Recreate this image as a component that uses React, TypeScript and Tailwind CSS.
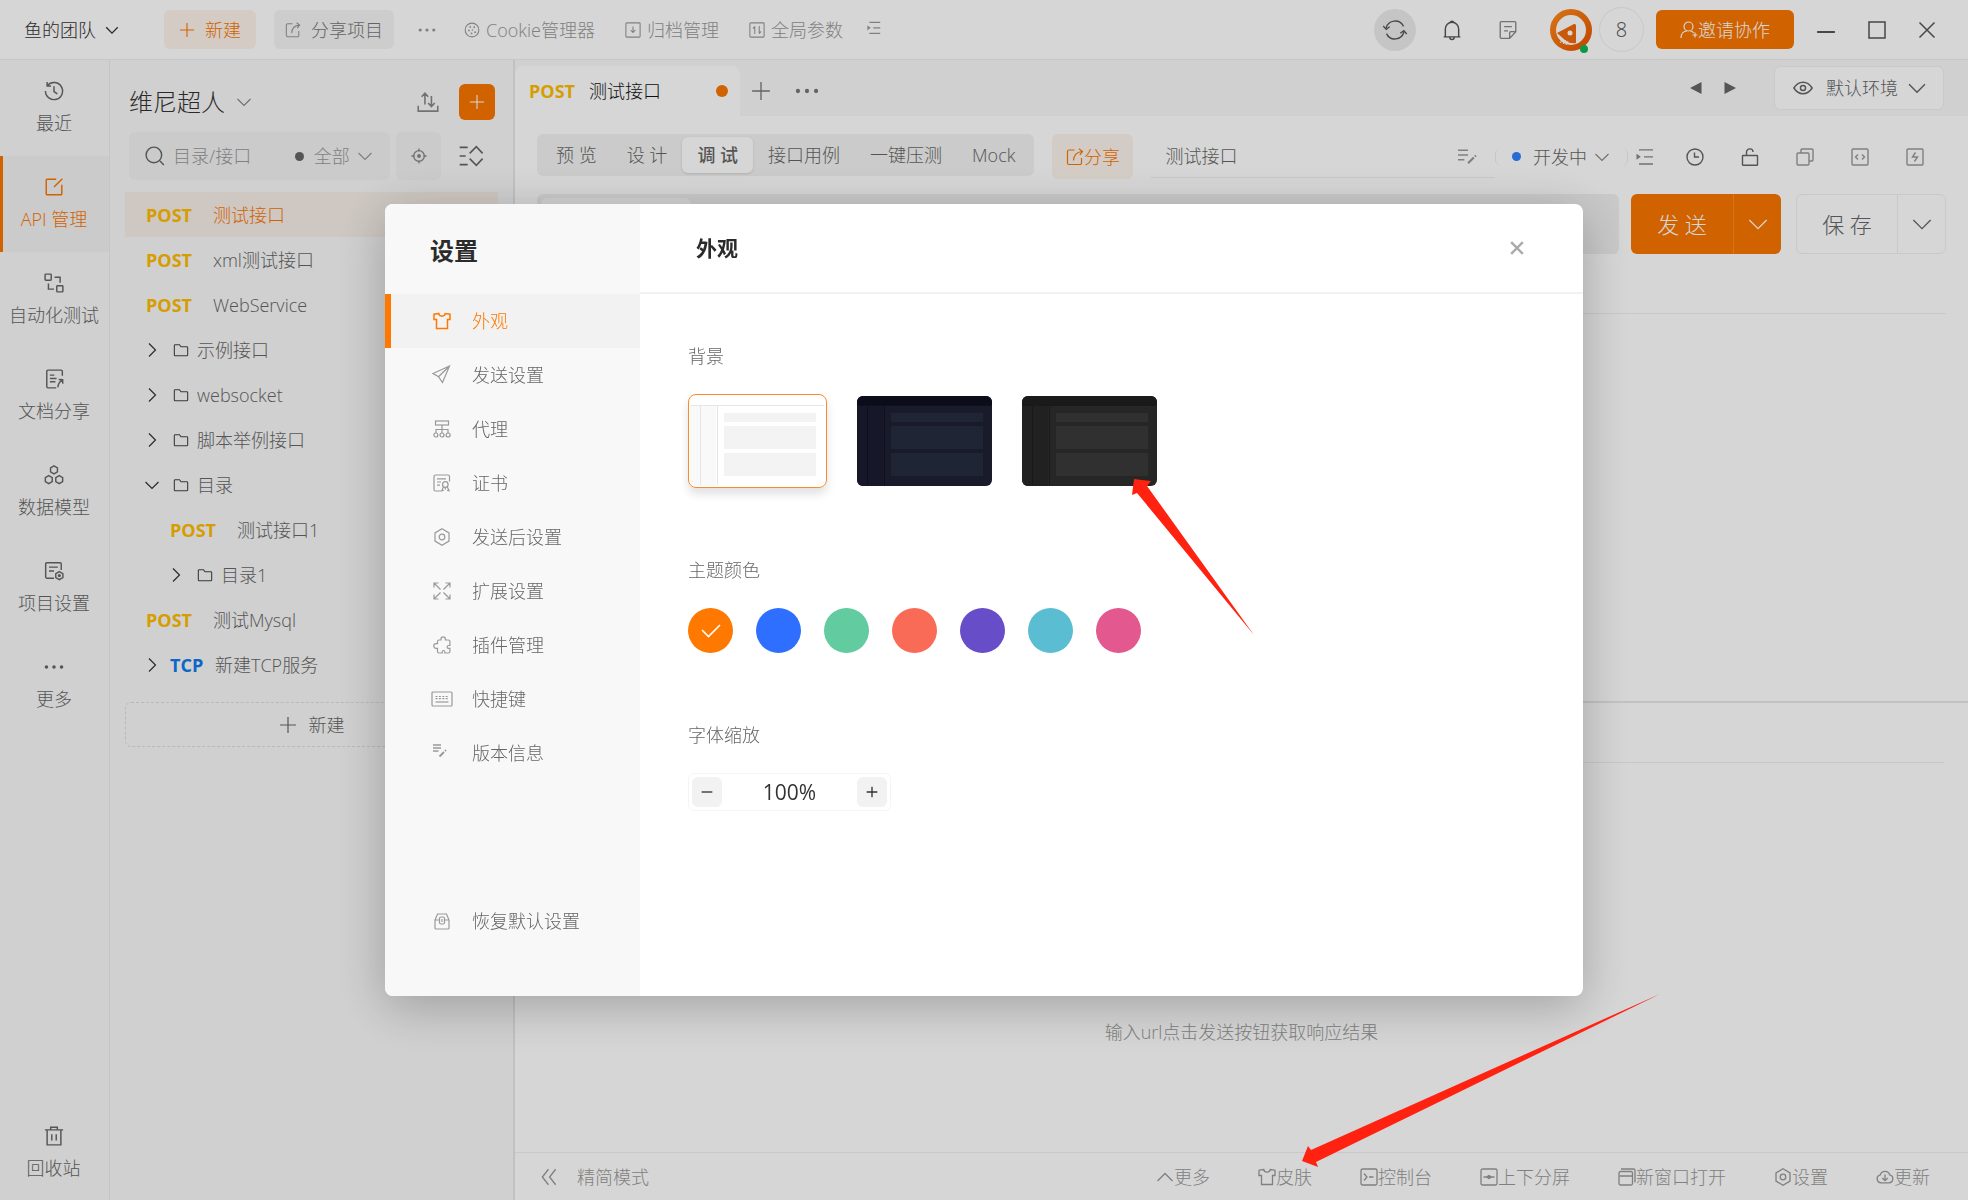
import React, { useState } from "react";
import clsx from "clsx";

type IconName =
  | "chevronDown"
  | "chevronRight"
  | "chevronUp"
  | "plus"
  | "minus"
  | "dots"
  | "share"
  | "cookie"
  | "archive"
  | "params"
  | "indent"
  | "sync"
  | "bell"
  | "note"
  | "userPlus"
  | "maximize"
  | "close"
  | "history"
  | "edit"
  | "flow"
  | "docShare"
  | "model"
  | "projectSettings"
  | "trash"
  | "transfer"
  | "search"
  | "locate"
  | "expandList"
  | "folder"
  | "eye"
  | "lineEdit"
  | "version"
  | "clock"
  | "unlock"
  | "copy"
  | "code"
  | "bolt"
  | "collapse"
  | "shirt"
  | "console"
  | "split"
  | "window"
  | "hexagon"
  | "cloud"
  | "send"
  | "proxy"
  | "certificate"
  | "expand"
  | "plugin"
  | "keyboard"
  | "restore";

// Every icon is drawn in an 18 x 18 box.
const icons: Record<IconName, React.ReactNode> = {
  chevronDown: <path d="M2.5 6 9 12.5 15.5 6" />,
  chevronRight: <path d="M6 2.5 12.5 9 6 15.5" />,
  chevronUp: <path d="M1.5 13 9 5.5l7.5 7.5" />,
  plus: <path d="M9 1v16M1 9h16" />,
  minus: <path d="M1 9h16" />,
  dots: (
    <g fill="currentColor" stroke="none">
      <circle cx="2.2" cy="9" r="1.6" />
      <circle cx="9" cy="9" r="1.6" />
      <circle cx="15.8" cy="9" r="1.6" />
    </g>
  ),
  share: (
    <>
      <path d="M8.5 2H3a1.5 1.5 0 0 0-1.500 1.500v11.500A1.500 1.500 0 0 0 3 16.500h11a1.500 1.500 0 0 0 1.500-1.500v-5" />
      <path d="M7.500 12.500c.3-5 3-8.500 8.500-9M13 .8l3.500 2.700-2.700 3.300" />
    </>
  ),
  cookie: (
    <>
      <circle cx="9" cy="9" r="7.700" />
      <g fill="currentColor" stroke="none">
        <circle cx="7" cy="5.500" r="1" />
        <circle cx="11.500" cy="5.800" r="1" />
        <circle cx="5.500" cy="9.500" r="1" />
        <circle cx="9.500" cy="9" r=".8" />
        <circle cx="8.500" cy="12.800" r="1" />
        <circle cx="12.500" cy="11.500" r="1" />
      </g>
    </>
  ),
  archive: (
    <>
      <rect x="1" y="1" width="16" height="16" rx="1" />
      <path d="M9 5v6.500M6.300 9 9 11.800 11.700 9" />
    </>
  ),
  params: (
    <>
      <rect x="1" y="1" width="16" height="16" rx="1" />
      <path d="M6.500 5v8.500M4.500 7.500l2-2.500M11.500 4.500V13M11.500 13l2-2.500" />
    </>
  ),
  indent: (
    <>
      <path d="M3 1.800h14M8 8.800h9M3 16h14" />
      <path d="M.5 5.800 4.800 8.800.5 11.800z" fill="currentColor" stroke="none" />
    </>
  ),
  sync: (
    <>
      <path d="M2.300 7.500a7 7 0 0 1 13.100-1.200M15.700 10.500a7 7 0 0 1-13.100 1.200" />
      <path d="m.2 6 2.200 2.500L5 6.500M17.800 12l-2.200-2.500L13 11.500" />
    </>
  ),
  bell: (
    <path d="M3 15V8a6 6 0 0 1 12 0v7M1.500 15.200h15M7 15.500a2 2 0 0 0 4 0M7.300 2.300a1.800 1.800 0 0 1 3.400 0" />
  ),
  note: (
    <path d="M16 10.500V2.500a1 1 0 0 0-1-1H3a1 1 0 0 0-1 1v13a1 1 0 0 0 1 1h7.500zM10.500 16.500v-5a1 1 0 0 1 1-1H16M5.500 6h7M5.500 9.800h3.500" />
  ),
  userPlus: (
    <>
      <circle cx="8.500" cy="5.500" r="4.500" />
      <path d="M1 17c0-4 2.500-7 6-7.200M10.500 10c1.500.3 2.600 1 3.200 2M15 11.500v5M12.500 14H17.500" />
    </>
  ),
  maximize: <rect x="1" y="1" width="16" height="16" />,
  close: <path d="m1.500 1.500 15 15M16.500 1.500l-15 15" />,
  history: <path d="M3 4.200A7.700 7.700 0 1 1 1.300 9M2.800 1v3.500h3.500M9 4.800V9.500l3 2" />,
  edit: (
    <>
      <path d="M11 2H3a1 1 0 0 0-1 1v12a1 1 0 0 0 1 1h12a1 1 0 0 0 1-1V7" />
      <path d="m9 9 7.500-7.500" />
    </>
  ),
  flow: (
    <>
      <rect x="1" y="1" width="5.500" height="5.500" rx=".6" />
      <rect x="11.500" y="11.500" width="5.500" height="5.500" rx=".6" />
      <path d="M9.500 3.800h5v5M4 9.500v5h5" />
    </>
  ),
  docShare: (
    <>
      <path d="M16.500 6V2a1 1 0 0 0-1-1h-12a1 1 0 0 0-1 1v14a1 1 0 0 0 1 1h7.500" />
      <path d="M5.300 5.500h4M5.300 8.500h6M5.300 11.500h5M12.500 16.500c.2-3 1.200-5 3.800-6.500M13.300 9.500l3.500.2.100 3.500" />
    </>
  ),
  model: (
    <path d="m9 .8 3.100 1.800v3.600L9 8 5.900 6.200V2.600zM4.300 9.500l3.100 1.800v3.600l-3.100 1.800-3.100-1.800v-3.600zM13.700 9.500l3.100 1.800v3.600l-3.100 1.800-3.100-1.800v-3.600z" />
  ),
  projectSettings: (
    <>
      <path d="M15.500 8V2.500a1 1 0 0 0-1-1h-12a1 1 0 0 0-1 1v12a1 1 0 0 0 1 1h6.500M4.500 5.500h8M4.500 9h4.500" />
      <path d="m13.800 9.500 3.200 1.800v3.600l-3.200 1.800-3.200-1.800v-3.600z" />
      <circle cx="13.800" cy="13.100" r=".8" />
    </>
  ),
  trash: <path d="M.8 3.500h16.400M2.800 3.500V17h12.400V3.500M6 3.500V1.200h6v2.300M7 7.500v5.500M11 7.500v5.500" />,
  transfer: (
    <path d="M1 12v4.500h16V12M6.500 11V2M3.800 4.700 6.500 1.800l2.700 2.900M11.800 4v8M9.100 9.800l2.700 2.900 2.700-2.900" />
  ),
  search: (
    <>
      <circle cx="8" cy="8" r="7" />
      <path d="m13.500 13.500 3.500 3.500" />
    </>
  ),
  locate: (
    <>
      <circle cx="9" cy="9" r="6" />
      <path d="M9 .5V4M9 14v3.500M.5 9H4M14 9h3.500" />
      <circle cx="9" cy="9" r="1.400" fill="currentColor" />
    </>
  ),
  expandList: (
    <path d="M.5 2.500h6M.5 9h4.500M.5 15.500h6M8 7l5-5 4.700 5M8 11l5 5 4.700-5" />
  ),
  folder: (
    <path d="M1.500 14.500V4a1 1 0 0 1 1-1h4.800l1.700 2.300h6.500a1 1 0 0 1 1 1v8.200a1 1 0 0 1-1 1h-13a1 1 0 0 1-1-1z" />
  ),
  eye: (
    <>
      <path d="M.8 9C3 5.500 5.700 3.800 9 3.800S15 5.500 17.200 9C15 12.500 12.300 14.200 9 14.200S3 12.500.8 9z" />
      <circle cx="9" cy="9" r="2.300" />
    </>
  ),
  lineEdit: (
    <>
      <path d="M0 3h9.500M0 7.500h9.500M0 12h6" strokeWidth="1.500" />
      <path d="m9.500 15.500 5.500-5.500M16 9l1-1" strokeWidth="2" />
    </>
  ),
  version: (
    <>
      <path d="M0 1h8M0 4h8M0 7h5.500" strokeWidth="1.500" />
      <path d="m6.500 12.500 4.500-4.500M12 7l1-1" strokeWidth="1.800" />
    </>
  ),
  clock: (
    <>
      <circle cx="9" cy="9" r="8" />
      <path d="M8.500 4.500V9h4.500" />
    </>
  ),
  unlock: (
    <>
      <rect x="1.500" y="7.500" width="15" height="9.800" rx=".6" />
      <path d="M5.500 7.500V4.300a3.300 3.300 0 0 1 6.600-.3" />
    </>
  ),
  copy: (
    <>
      <rect x="1" y="5" width="12" height="12" rx="1" />
      <path d="M5 5V2a1 1 0 0 1 1-1h10a1 1 0 0 1 1 1v10a1 1 0 0 1-1 1h-3" />
    </>
  ),
  code: (
    <>
      <rect x="1" y="1" width="16" height="16" rx="1" />
      <path d="m7 6.500-2.500 2.500 2.500 2.500M11 6.500l2.500 2.500-2.500 2.500" />
    </>
  ),
  bolt: (
    <>
      <rect x="1" y="1" width="16" height="16" rx="1" />
      <path d="M9.500 4.500 6.500 9h5L8.500 13.500" />
    </>
  ),
  collapse: <path d="M8.500 2 3 9l5.500 7M15 2 9.500 9l5.500 7" />,
  shirt: (
    <path d="M5.800 1.500 1 2.200v5.300h2.500v9h11v-9H17V2.200l-4.800-.7C11.800 5 6.200 5 5.800 1.500z" />
  ),
  console: (
    <>
      <rect x="1" y="1" width="16" height="16" rx="1.500" />
      <path d="m4 5.500 3 3.500-3 3.500M9 9h4.500" />
    </>
  ),
  split: (
    <>
      <rect x="1" y="1" width="16" height="16" rx="1.500" />
      <path d="M3.500 9h11M6.500 9 9 7.500 11.500 9 9 10.500z" fill="currentColor" />
    </>
  ),
  window: (
    <>
      <rect x="1" y="3.500" width="13.500" height="13.500" rx="1.500" />
      <path d="M1.500 8H14M3 1h12.500A1.500 1.500 0 0 1 17 2.500V14.500" />
    </>
  ),
  hexagon: (
    <>
      <path d="M9 .8 16 4.900v8.200l-7 4.100-7-4.100V4.900z" />
      <circle cx="9" cy="9" r="2.800" />
    </>
  ),
  cloud: (
    <path d="M5 14.800a4 4 0 0 1-.7-7.900 4.900 4.900 0 0 1 9.400 0 4 4 0 0 1-.7 7.900zM9 6.500v6M6.300 10 9 12.700l2.700-2.700" />
  ),
  send: <path d="M16.500 0 0 7.500l5.500 3.200 4 5.800zM16.500 0 5.500 10.700" />,
  proxy: (
    <>
      <rect x="2.500" y="1" width="13" height="4" />
      <path d="M9 5v8M3 13V9.500h12V13" />
      <circle cx="2.900" cy="15" r="2" />
      <circle cx="9" cy="15" r="2" />
      <circle cx="15.100" cy="15" r="2" />
    </>
  ),
  certificate: (
    <>
      <path d="M16.500 7.500v-5a1.500 1.500 0 0 0-1.500-1.500H2.500A1.500 1.500 0 0 0 1 2.500v13A1.500 1.500 0 0 0 2.500 17H8M4 4.800h9M4 8h4M4 11.200h3" />
      <circle cx="12.300" cy="10.500" r="2.800" />
      <path d="m10.500 12.800-1.700 4 1.900-.4M14.200 12.800l1.900 4-2-.4M12.300 13.500v2" />
    </>
  ),
  expand: (
    <path d="M1 5.500V1h4.500M1 1l6.500 6.500M12.500 1H17v4.500M17 1l-6.500 6.500M1 12.500V17h4.500M1 17l6.500-6.500M12.500 17H17v-4.500M17 17l-6.500-6.500" />
  ),
  plugin: (
    <path d="M4.500 12.300H3a2.300 2.300 0 0 1 0-4.600h1.500V5.500a1.500 1.500 0 0 1 1.500-1.500h2V3a2.200 2.200 0 0 1 4.400 0v1h3a1.500 1.500 0 0 1 1.500 1.500v4h-1.400a1.400 1.400 0 0 0 0 2.800h1.400v3.200a1.500 1.500 0 0 1-1.500 1.500h-3.600v-1.200a1.300 1.300 0 0 0-2.600 0V17H6a1.500 1.500 0 0 1-1.500-1.500z" />
  ),
  keyboard: (
    <>
      <rect x="-1" y="2" width="20" height="14" rx="1" />
      <path d="M2.500 6.500h13M2.500 8.700h13" strokeDasharray="2 1.400" />
      <path d="M2.500 12h13" />
    </>
  ),
  restore: (
    <>
      <path d="M2 8 4.500 2h9L16 8v8a1 1 0 0 1-1 1H3a1 1 0 0 1-1-1zM2 8h4.500M11.500 8H16" />
      <rect x="6.500" y="5" width="5" height="7" rx="1.500" />
      <path d="M9 7v3" />
    </>
  ),
};

type IconProps = {
  name: IconName;
  className?: string;
  weight?: number;
};

const Icon: React.FC<IconProps> = ({ name, className = "size-[18px]", weight = 1.2 }) => (
  <svg
    viewBox="0 0 18 18"
    fill="none"
    stroke="currentColor"
    strokeWidth={weight}
    className={clsx("shrink-0 overflow-visible", className)}
    aria-hidden="true"
  >
    {icons[name]}
  </svg>
);

const TopBar: React.FC = () => (
  <header className="flex h-[60px] items-center justify-between border-b border-[#efefef] bg-white pl-6 pr-8 text-[#999]">
    <div className="flex items-center">
      <button className="flex items-center gap-2 text-[#333]">
        鱼的团队
        <Icon name="chevronDown" className="size-4" weight={1.5} />
      </button>
      <button className="ml-11 flex h-[39px] items-center gap-2.5 rounded-md bg-[#fdf4ea] px-[15px] text-[#fa7500]">
        <Icon name="plus" className="size-4" />
        新建
      </button>
      <button className="ml-[18px] flex h-[39px] items-center gap-2.5 rounded-md bg-[#f5f5f5] px-[11px] text-[#777]">
        <Icon name="share" className="size-4 text-[#999]" />
        分享项目
      </button>
      <button aria-label="更多操作" className="ml-6">
        <Icon name="dots" />
      </button>
      <a href="#cookie" className="ml-7 flex items-center gap-1.5">
        <Icon name="cookie" className="size-4" />
        Cookie管理器
      </a>
      <a href="#archive" className="ml-[30px] flex items-center gap-1.5">
        <Icon name="archive" className="size-4" />
        归档管理
      </a>
      <a href="#params" className="ml-[30px] flex items-center gap-1.5">
        <Icon name="params" className="size-4" />
        全局参数
      </a>
      <button aria-label="列表" className="mb-1 ml-6">
        <Icon name="indent" className="size-[14px]" weight={1.5} />
      </button>
    </div>
    <div className="flex items-center text-[#555]">
      <button aria-label="同步" className="flex size-[42px] items-center justify-center rounded-full bg-[#ebebeb]">
        <Icon name="sync" className="size-6" weight={1} />
      </button>
      <button aria-label="通知" className="ml-[26px]">
        <Icon name="bell" className="size-5" weight={1.3} />
      </button>
      <button aria-label="备注" className="ml-9 text-[#888]">
        <Icon name="note" className="size-5" />
      </button>
      <button aria-label="个人中心" className="relative ml-8">
        <svg viewBox="0 0 42 42" className="size-[42px]" aria-hidden="true">
          <defs>
            <linearGradient id="avatar" x1="0" y1="0" x2="1" y2="1">
              <stop offset="0" stopColor="#ff8a1a" />
              <stop offset="1" stopColor="#e85500" />
            </linearGradient>
          </defs>
          <circle cx="21" cy="21" r="18" fill="#fff" stroke="url(#avatar)" strokeWidth="6" />
          <path d="M7 24 24 15q2-.5 2 1.500V34q-6 1-10-2z" fill="#ef6a0c" />
          <path d="m10 34 3-4M13 35l3-4M16 36l2-4" stroke="#fff" strokeWidth="1" />
          <circle cx="20" cy="24" r="2.500" fill="#fff" />
        </svg>
        <span className="absolute right-1 -bottom-0.5 size-2 rounded-full bg-[#0bb850]" />
      </button>
      <span className="ml-[7px] flex size-[45px] items-center justify-center rounded-full border border-[#efefef] text-[20px]">
        8
      </span>
      <button className="ml-3 flex h-[39px] w-[138px] items-center justify-center rounded-md bg-[#fa7500] text-white">
        <Icon name="userPlus" />
        邀请协作
      </button>
      <button aria-label="最小化" className="ml-[22px] pt-1">
        <Icon name="minus" className="size-5" weight={1.8} />
      </button>
      <button aria-label="最大化" className="ml-8">
        <Icon name="maximize" className="size-[18px]" weight={1.5} />
      </button>
      <button aria-label="关闭窗口" className="ml-8">
        <Icon name="close" className="size-[18px]" weight={1.5} />
      </button>
    </div>
  </header>
);

const railItems: { label: string; icon: IconName }[] = [
  { label: "最近", icon: "history" },
  { label: "API 管理", icon: "edit" },
  { label: "自动化测试", icon: "flow" },
  { label: "文档分享", icon: "docShare" },
  { label: "数据模型", icon: "model" },
  { label: "项目设置", icon: "projectSettings" },
  { label: "更多", icon: "dots" },
];

const Rail: React.FC = () => (
  <nav className="flex w-[110px] shrink-0 flex-col border-r border-[#ebebeb] pb-5">
    {railItems.map((item) => {
      const active = item.label === "API 管理";
      return (
        <a
          key={item.label}
          href={`#${item.icon}`}
          className={clsx(
            "flex h-24 flex-col items-center justify-center gap-2.5 border-l-[3px] pr-1",
            active ? "border-[#fa7500] bg-[#f2f2f2] text-[#fa7500]" : "border-transparent text-[#666]"
          )}
        >
          <Icon name={item.icon} className="size-5" weight={1.3} />
          {item.label}
        </a>
      );
    })}
    <a href="#trash" className="mt-auto flex flex-col items-center gap-2.5 pr-0.5 text-[#666]">
      <Icon name="trash" className="size-5" weight={1.3} />
      回收站
    </a>
  </nav>
);

type TreeRow = {
  name: string;
  method?: "POST" | "TCP";
  nested?: boolean;
  open?: boolean;
  active?: boolean;
};

const tree: TreeRow[] = [
  { name: "测试接口", method: "POST", active: true },
  { name: "xml测试接口", method: "POST" },
  { name: "WebService", method: "POST" },
  { name: "示例接口" },
  { name: "websocket" },
  { name: "脚本举例接口" },
  { name: "目录", open: true },
  { name: "测试接口1", method: "POST", nested: true },
  { name: "目录1", nested: true },
  { name: "测试Mysql", method: "POST" },
  { name: "新建TCP服务", method: "TCP" },
];

const Sidebar: React.FC = () => (
  <aside className="flex w-[405px] shrink-0 flex-col border-r-2 border-[#e6e6e6] px-[15px] pt-6">
    <div className="flex h-9 items-center">
      <button className="ml-1 flex items-center gap-2.5 text-2xl leading-9 text-[#333]">
        维尼超人
        <Icon name="chevronDown" className="size-[18px] text-[#888]" />
      </button>
      <button aria-label="导入导出" className="ml-auto text-[#888]">
        <Icon name="transfer" className="size-[22px]" weight={1.3} />
      </button>
      <button
        aria-label="新建接口"
        className="ml-5 mr-[3px] flex size-9 items-center justify-center rounded-md bg-[#fa7500] text-white"
      >
        <Icon name="plus" className="size-4" />
      </button>
    </div>
    <div className="mt-3 ml-1 flex h-12 items-center gap-1.5">
      <div className="flex h-12 w-[261px] items-center rounded-md bg-[#f2f2f2] px-4 text-[#999]">
        <Icon name="search" className="size-5 text-[#666]" weight={1.3} />
        <input
          aria-label="搜索"
          placeholder="目录/接口"
          className="ml-2 w-28 bg-transparent outline-none placeholder:text-[#999]"
        />
        <span className="ml-2.5 size-[9px] rounded-full bg-[#666]" />
        <select aria-label="范围" className="ml-2.5 w-11 appearance-none bg-transparent outline-none">
          <option>全部</option>
        </select>
        <Icon name="chevronDown" className="size-[18px]" />
      </div>
      <button
        aria-label="定位"
        className="flex h-12 w-[45px] items-center justify-center rounded-md bg-[#f2f2f2] text-[#888]"
      >
        <Icon name="locate" className="size-4" weight={1.5} />
      </button>
      <button aria-label="展开列表" className="ml-3 text-[#666]">
        <Icon name="expandList" className="size-6" />
      </button>
    </div>
    <ul className="mt-3 text-[#666]">
      {tree.map((row) => (
        <li
          key={row.name}
          className={clsx(
            "flex h-[45px] items-center",
            row.nested ? "pl-[42px]" : "pl-[18px]",
            row.active && "bg-[#f6eee8] text-[#fa7500]"
          )}
        >
          {row.method !== "POST" && (
            <Icon
              name={row.open ? "chevronDown" : "chevronRight"}
              className="mr-[9px] size-[18px] text-[#333]"
            />
          )}
          {!row.method && <Icon name="folder" className="ml-[3px] mr-2 size-4 text-[#444]" />}
          {row.method === "POST" && (
            <span className="ml-[3px] w-[67px] font-bold text-[#ffbc00]">POST</span>
          )}
          {row.method === "TCP" && <span className="w-[45px] font-bold text-[#0c7af0]">TCP</span>}
          <a href={`#${row.name}`}>{row.name}</a>
        </li>
      ))}
    </ul>
    <button className="mt-[15px] flex h-[45px] items-center justify-center gap-3 rounded-md border border-dashed border-[#ddd] text-[#666]">
      <Icon name="plus" />
      新建
    </button>
  </aside>
);

const modes = ["预 览", "设 计", "调 试", "接口用例", "一键压测", "Mock"];

const toolbarIcons: { label: string; icon: IconName; dark?: boolean }[] = [
  { label: "历史", icon: "clock", dark: true },
  { label: "锁定", icon: "unlock", dark: true },
  { label: "复制", icon: "copy" },
  { label: "代码", icon: "code" },
  { label: "快捷请求", icon: "bolt" },
];

const Workspace: React.FC = () => (
  <main className="flex min-w-0 flex-1 flex-col">
    <div className="flex h-14 items-end pr-6">
      <div className="flex h-[50px] w-[225px] items-center rounded-t-lg bg-white pr-3 pl-[14px]">
        <span className="w-[60px] font-bold text-[#ffbc00]">POST</span>
        <span className="text-[#111]">测试接口</span>
        <span className="ml-auto size-3 rounded-full bg-[#fa7500]" />
      </div>
      <div className="flex h-[50px] items-center text-[#777]">
        <button aria-label="新标签" className="ml-[11px]">
          <Icon name="plus" className="size-5" />
        </button>
        <button aria-label="标签菜单" className="ml-6">
          <Icon name="dots" className="size-6" />
        </button>
      </div>
      <div className="ml-auto flex h-[50px] items-start text-[#666]">
        <button aria-label="上一个" className="mt-4">
          <svg viewBox="0 0 12 12" className="size-3" fill="currentColor" aria-hidden="true">
            <path d="M11.500 0v12L0 6z" />
          </svg>
        </button>
        <button aria-label="下一个" className="mt-4 ml-[22px]">
          <svg viewBox="0 0 12 12" className="size-3" fill="currentColor" aria-hidden="true">
            <path d="M.5 0v12L12 6z" />
          </svg>
        </button>
        <div className="ml-[38px] flex h-11 items-center rounded-md border border-[#f0f0f0] bg-white pr-[15px] pl-[18px]">
          <Icon name="eye" className="size-5" weight={1.3} />
          <select aria-label="环境" className="ml-[13px] w-20 appearance-none bg-transparent outline-none">
            <option>默认环境</option>
          </select>
          <Icon name="chevronDown" className="size-[22px]" />
        </div>
      </div>
    </div>

    <section className="flex flex-[8_1_0px] flex-col border-b-2 border-[#e8e8e8] bg-white px-[22px] pt-[18px]">
      <div className="flex h-[45px] items-center text-[#666]">
        <div className="flex h-[42px] items-center self-start rounded-md bg-[#f2f2f2] px-1">
          {modes.map((mode) => (
            <button
              key={mode}
              className={clsx(
                "h-9 rounded-md px-[15px]",
                mode === "调 试" && "bg-white font-medium shadow-sm"
              )}
            >
              {mode}
            </button>
          ))}
        </div>
        <button className="ml-[18px] flex h-[45px] w-[81px] shrink-0 items-center justify-center rounded-md bg-[#fcf4ec] text-[#fa7500]">
          <Icon name="share" />
          分享
        </button>
        <div className="ml-[18px] flex h-[42px] min-w-0 flex-1 items-center border-b border-[#f0f0f0] pr-[18px] pl-[14px]">
          <input
            aria-label="接口名称"
            defaultValue="测试接口"
            className="min-w-0 flex-1 bg-transparent outline-none"
          />
          <Icon name="lineEdit" className="size-[19px] text-[#999]" />
        </div>
        <div className="flex h-[18px] items-center rounded-md border-x border-[#eee] px-4">
          <span className="size-[9px] rounded-full bg-[#2f80ff]" />
          <select aria-label="状态" className="ml-3 w-[60px] appearance-none bg-transparent outline-none">
            <option>开发中</option>
          </select>
          <Icon name="chevronDown" className="size-[18px] text-[#888]" />
        </div>
        <button aria-label="目录" className="ml-2 text-[#888]">
          <Icon name="indent" weight={1.3} />
        </button>
        <div className="mr-[22px] ml-8 flex gap-[37px]">
          {toolbarIcons.map((item) => (
            <button
              key={item.icon}
              aria-label={item.label}
              className={item.dark ? "text-[#666]" : "text-[#999]"}
            >
              <Icon name={item.icon} weight={1.4} />
            </button>
          ))}
        </div>
      </div>

      <div className="mt-[15px] flex h-[60px]">
        <div className="flex min-w-0 flex-1 rounded-md bg-[#f0f0f0] p-1">
          <span className="w-[150px] rounded-md bg-[#fafafa]" />
        </div>
        <div className="ml-3 flex w-[150px] overflow-hidden rounded-md bg-[#fa7500] text-[22px] text-white">
          <button className="flex-1">发 送</button>
          <button
            aria-label="发送选项"
            className="flex w-12 items-center justify-center border-l border-[#ff8a26]"
          >
            <Icon name="chevronDown" className="size-6" weight={1} />
          </button>
        </div>
        <div className="ml-[15px] flex w-[150px] rounded-md border border-[#f0f0f0] text-[22px] text-[#666]">
          <button className="flex-1">保 存</button>
          <button
            aria-label="保存选项"
            className="flex w-12 items-center justify-center border-l border-[#f0f0f0]"
          >
            <Icon name="chevronDown" className="size-6" weight={1} />
          </button>
        </div>
      </div>
      <div className="h-[60px] border-b border-[#efefef]" />
    </section>

    <section className="flex flex-[7_1_0px] flex-col bg-white">
      <div className="mr-6 h-[60px] border-b border-[#efefef]" />
      <p className="mt-auto pb-[108px] text-center text-[#999]">输入url点击发送按钮获取响应结果</p>
      <BottomBar />
    </section>
  </main>
);

const bottomItems: { label: string; icon: IconName }[] = [
  { label: "更多", icon: "chevronUp" },
  { label: "皮肤", icon: "shirt" },
  { label: "控制台", icon: "console" },
  { label: "上下分屏", icon: "split" },
  { label: "新窗口打开", icon: "window" },
  { label: "设置", icon: "hexagon" },
  { label: "更新", icon: "cloud" },
];

const BottomBar: React.FC = () => (
  <footer className="flex h-12 shrink-0 items-center border-t border-[#f0f0f0] pr-[38px] pl-6 text-[#999]">
    <button className="flex items-center gap-[18px]">
      <Icon name="collapse" className="size-5" />
      精简模式
    </button>
    <div className="ml-auto flex gap-12">
      {bottomItems.map((item) => (
        <button key={item.label} className="flex items-center">
          <Icon name={item.icon} weight={1.3} />
          {item.label}
        </button>
      ))}
    </div>
  </footer>
);

const settingsItems: { label: string; icon: IconName }[] = [
  { label: "外观", icon: "shirt" },
  { label: "发送设置", icon: "send" },
  { label: "代理", icon: "proxy" },
  { label: "证书", icon: "certificate" },
  { label: "发送后设置", icon: "hexagon" },
  { label: "扩展设置", icon: "expand" },
  { label: "插件管理", icon: "plugin" },
  { label: "快捷键", icon: "keyboard" },
  { label: "版本信息", icon: "version" },
];

type Skin = {
  label: string;
  page: string;
  header: string;
  side: string;
  line: string;
  block: string;
};

const skins: Skin[] = [
  { label: "浅色", page: "#ffffff", header: "#ffffff", side: "#f9f9f9", line: "#e6e6e6", block: "#f3f3f3" },
  { label: "深蓝", page: "#191a2a", header: "#0b0d1b", side: "#16182a", line: "#0e1020", block: "#202536" },
  { label: "深色", page: "#262626", header: "#1a1a1a", side: "#212121", line: "#191919", block: "#303030" },
];

const SkinPreview: React.FC<{ skin: Skin }> = ({ skin }) => (
  <svg viewBox="0 0 135 90" className="h-[90px] w-[135px] rounded-md" aria-hidden="true">
    <rect width="135" height="90" fill={skin.page} />
    <rect y="9" width="26" height="81" fill={skin.side} />
    <path d="M10.500 9v80M27.500 9v80M1 9.500h133" stroke={skin.line} />
    <rect width="135" height="9" fill={skin.header} />
    <rect x="34" y="17" width="92" height="9" fill={skin.block} />
    <rect x="34" y="30" width="92" height="23" fill={skin.block} />
    <rect x="34" y="57" width="92" height="23" fill={skin.block} />
  </svg>
);

const themeColors = [
  { label: "橙色", bg: "bg-[#ff7800]" },
  { label: "蓝色", bg: "bg-[#2f6fff]" },
  { label: "绿色", bg: "bg-[#62cb9f]" },
  { label: "红色", bg: "bg-[#fa6b57]" },
  { label: "紫色", bg: "bg-[#684dc9]" },
  { label: "青色", bg: "bg-[#5abdd2]" },
  { label: "粉色", bg: "bg-[#e2588f]" },
];

const SettingsDialog: React.FC = () => {
  const [skin, setSkin] = useState("浅色");
  const [theme, setTheme] = useState("橙色");
  const [zoom, setZoom] = useState(100);

  return (
    <div
      role="dialog"
      aria-modal="true"
      aria-labelledby="settings-title"
      className="flex min-h-[66vh] w-full max-w-[1198px] overflow-hidden rounded-lg bg-white shadow-[0_10px_50px_rgba(0,0,0,0.25)]"
    >
      <div className="flex w-[255px] shrink-0 flex-col bg-[#f8f8f8] pb-12">
        <h2 id="settings-title" className="flex h-[90px] items-center pt-1 pl-[45px] text-2xl font-bold text-[#2b2b2b]">
          设置
        </h2>
        {settingsItems.map((item) => {
          const active = item.label === "外观";
          return (
            <button
              key={item.label}
              className={clsx(
                "flex h-[54px] items-center gap-[21px] border-l-[6px] pl-[42px]",
                active ? "border-[#ff7800] bg-[#f2f2f2] text-[#ff7800]" : "border-transparent text-[#666]"
              )}
            >
              <Icon
                name={item.icon}
                className={clsx("size-[18px]", !active && "text-[#999]")}
                weight={active ? 1.5 : 1.2}
              />
              {item.label}
            </button>
          );
        })}
        <button className="mt-auto flex h-[54px] items-center gap-[21px] pl-12 text-[#666]">
          <Icon name="restore" className="size-[18px] text-[#999]" />
          恢复默认设置
        </button>
      </div>

      <div className="min-w-0 flex-1">
        <div className="flex h-[90px] items-center justify-between border-b-2 border-[#f2f2f2] pr-[59px] pl-14">
          <h3 className="text-[21px] font-bold text-[#2b2b2b]">外观</h3>
          <button aria-label="关闭" className="text-[#aaa]">
            <Icon name="close" className="size-[14px]" weight={3} />
          </button>
        </div>
        <div className="px-12 pt-[50px] text-[#666]">
          <h4 className="leading-6">背景</h4>
          <div className="mt-[26px] flex gap-[30px]">
            {skins.map((item) => (
              <label
                key={item.label}
                className={clsx(
                  "flex items-center justify-center",
                  skin === item.label && "rounded-lg border border-[#f78b2d] p-px shadow-[0_6px_10px_rgba(0,0,0,0.12)]"
                )}
              >
                <input
                  type="radio"
                  name="skin"
                  aria-label={item.label}
                  checked={skin === item.label}
                  onChange={() => setSkin(item.label)}
                  className="sr-only"
                />
                <SkinPreview skin={item} />
              </label>
            ))}
          </div>

          <h4 className="mt-[70px] leading-6">主题颜色</h4>
          <div className="mt-[26px] flex gap-[23px]">
            {themeColors.map((item) => (
              <label
                key={item.label}
                className={clsx("flex size-[45px] items-center justify-center rounded-full text-white", item.bg)}
              >
                <input
                  type="radio"
                  name="theme"
                  aria-label={item.label}
                  checked={theme === item.label}
                  onChange={() => setTheme(item.label)}
                  className="sr-only"
                />
                {theme === item.label && (
                  <svg
                    viewBox="0 0 20 14"
                    className="h-[14px] w-5"
                    fill="none"
                    stroke="currentColor"
                    strokeWidth="1.6"
                    aria-hidden="true"
                  >
                    <path d="m1 6 6.500 6.500L19 1" />
                  </svg>
                )}
              </label>
            ))}
          </div>

          <h4 className="mt-[70px] leading-6">字体缩放</h4>
          <div className="mt-[26px] flex h-[38px] w-[203px] items-center justify-between rounded-md border border-[#f4f4f4] px-[3px] text-[#333]">
            <button
              aria-label="缩小"
              onClick={() => setZoom(zoom - 10)}
              className="flex size-[30px] items-center justify-center rounded-md bg-[#f2f2f2]"
            >
              <Icon name="minus" className="size-3" weight={2} />
            </button>
            <span className="text-[21px] font-normal">{zoom}%</span>
            <button
              aria-label="放大"
              onClick={() => setZoom(zoom + 10)}
              className="flex size-[30px] items-center justify-center rounded-md bg-[#f2f2f2]"
            >
              <Icon name="plus" className="size-3" weight={2} />
            </button>
          </div>
        </div>
      </div>
    </div>
  );
};

// Red pointers drawn over the window.
const Pointers: React.FC = () => (
  <svg
    viewBox="0 0 1968 1200"
    className="pointer-events-none fixed inset-0 h-full w-full"
    fill="#ff2211"
    aria-hidden="true"
  >
    <path d="m1134 479 17 2-4 5L1254 635 1137 493l-5 2z" />
    <path d="m1302 1161 6-15 3 4L1660 994 1316 1162l2 5z" />
  </svg>
);

const App: React.FC = () => (
  <div className="flex min-h-screen flex-col bg-[#f8f8f8] font-['Open_Sans','Noto_Sans_CJK_SC',sans-serif] text-lg leading-6 font-light">
    <TopBar />
    <div className="flex flex-1">
      <Rail />
      <Sidebar />
      <Workspace />
    </div>
    <div className="fixed inset-0 flex items-center justify-center bg-black/[0.16]">
      <SettingsDialog />
    </div>
    <Pointers />
  </div>
);

export default App;
